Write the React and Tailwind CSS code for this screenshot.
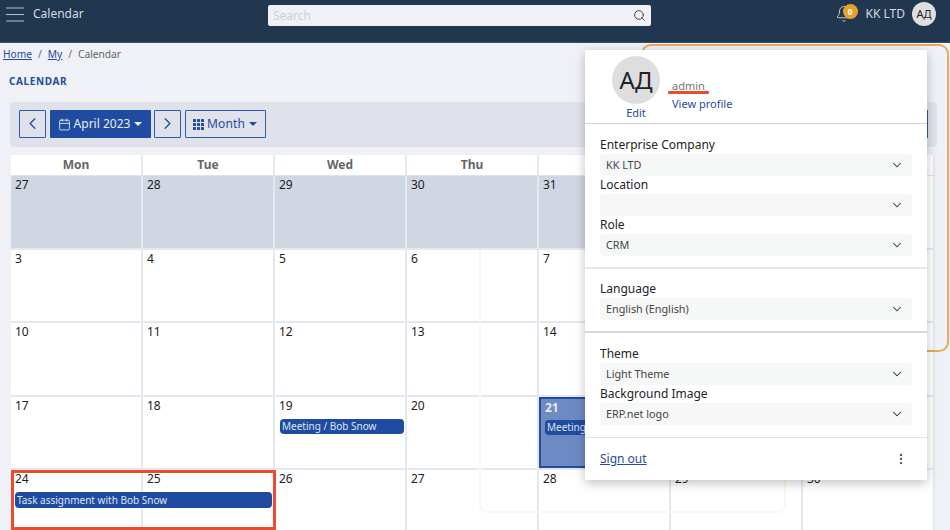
import React from "react";
import { ChevronDown, ChevronLeft, ChevronRight, Search, Bell, Calendar, MoreVertical } from "lucide-react";

const weeks = [
  [27, 28, 29, 30, 31, 1, 2],
  [3, 4, 5, 6, 7, 8, 9],
  [10, 11, 12, 13, 14, 15, 16],
  [17, 18, 19, 20, 21, 22, 23],
  [24, 25, 26, 27, 28, 29, 30],
];
const heads = ["Mon", "Tue", "Wed", "Thu", "Fri", "Sat", "Sun"];

function Caret() {
  return <span className="inline-block w-0 h-0 border-x-[4px] border-x-transparent border-t-[4px] border-t-current ml-[4px]" />;
}

function Grid3() {
  return (
    <svg width="11" height="11" viewBox="0 0 11 11" fill="currentColor">
      {[0, 4, 8].map((x) => [0, 4, 8].map((y) => <rect key={`${x}-${y}`} x={x} y={y} width="3" height="3" rx="0.5" />))}
    </svg>
  );
}

function Burger() {
  return (
    <svg width="18" height="15" viewBox="0 0 18 15" stroke="#b8c0ca" strokeWidth="1.2" fill="none">
      <path d="M0 1h18M0 7.5h18M0 14h18" />
    </svg>
  );
}

function Field({ label, value, className = "" }) {
  return (
    <div className={className}>
      <div className="h-[20px] text-[12px] leading-[22px] text-[#212529]">{label}</div>
      <div className="h-[22px] bg-[#f6f7f7] rounded-[3px] flex items-center justify-between pl-[6px] pr-[8px] text-[10.8px] text-[#444]">
        <span>{value}</span>
        <ChevronDown size={14} strokeWidth={1.8} className="text-[#333]" />
      </div>
    </div>
  );
}

function Event({ children, className = "" }) {
  return (
    <div className={`h-[15px] rounded-[4px] bg-[#1f4ba1] text-[#dfe6f3] text-[10px] leading-[15px] pl-[2px] whitespace-nowrap overflow-hidden ${className}`}>
      {children}
    </div>
  );
}

export default function App() {
  return (
    <div className="relative w-[950px] h-[530px] overflow-hidden bg-[#eff1f6] font-['Noto_Sans',sans-serif]">
      <header className="h-[43px] bg-[#21364f] border-b border-[#3a4f68] flex items-start text-[#d5dae1]">
        <div className="ml-[6px] mt-[7px]"><Burger /></div>
        <span className="ml-[9px] mt-[4px] w-[235px] text-[12px] leading-[20px]">Calendar</span>
        <div className="mt-[5px] w-[383px] h-[21px] bg-[#eff1f6] rounded-[2px] flex items-center justify-between pl-[5px] pr-[5px]">
          <span className="text-[12px] text-[#ccd0d6]">Search</span>
          <Search size={13} strokeWidth={1.6} className="text-[#333]" />
        </div>
        <div className="ml-auto mr-[14px] mt-[2px] flex items-center">
          <div className="relative mr-[13px]">
            <Bell size={18} strokeWidth={1.3} className="text-[#c5ccd4] -mt-[1px]" />
            <span className="absolute -top-[2px] left-[8px] w-[15px] h-[15px] rounded-full bg-[#e8a02c] text-white text-[8px] font-bold leading-[15px] text-center">0</span>
          </div>
          <span className="text-[12px] mr-[7px] whitespace-nowrap">KK LTD</span>
          <div className="w-[24px] h-[24px] rounded-full bg-[#dedede] text-[#222] text-[11px] leading-[24px] text-center">АД</div>
        </div>
      </header>

      <nav className="h-[20px] mt-[1px] pl-[3px] text-[10.2px] leading-[20px] text-[#666] whitespace-nowrap">
        <a className="text-[#1f4ba1] underline">Home</a>
        <span className="mx-[6px]">/</span>
        <a className="text-[#1f4ba1] underline">My</a>
        <span className="mx-[6px]">/</span>
        <span>Calendar</span>
      </nav>

      <div className="flex items-center justify-between pl-[9px] pr-[21px] mt-[7px] h-[20px]">
        <h1 className="text-[10px] font-bold tracking-[0.6px] text-[#1f4ba1]">CALENDAR</h1>
        <span className="text-[#777] text-[11px]">⋮</span>
      </div>

      <div className="ml-[10px] mr-[13px] mt-[11px] h-[45px] bg-[#dfe2ea] rounded-[4px] flex items-center pl-[9px] pb-[2px] gap-[3.5px] text-[#1f4ba1]">
        <button className="w-[27px] h-[28px] border-[1.5px] border-[#2e5cad] flex items-center justify-center rounded-[1px]">
          <ChevronLeft size={19} strokeWidth={1.6} />
        </button>
        <button className="w-[101px] h-[28px] pt-[1px] bg-[#1f4ba1] text-[#e8edf6] flex items-center justify-center text-[12px] rounded-[1px]">
          <Calendar size={13} strokeWidth={1.6} className="mr-[3px]" />
          April 2023
          <Caret />
        </button>
        <button className="w-[27px] h-[28px] border-[1.5px] border-[#2e5cad] flex items-center justify-center rounded-[1px]">
          <ChevronRight size={19} strokeWidth={1.6} />
        </button>
        <button className="w-[81px] h-[28px] pt-[1px] border-[1.5px] border-[#2e5cad] flex items-center justify-center text-[12px] tracking-[0.1px] rounded-[1px]">
          <Grid3 />
          <span className="ml-[3px]">Month</span>
          <Caret />
        </button>
        <button className="ml-auto mr-[9px] w-[30px] h-[28px] border-[1.5px] border-[#2e5cad]" />
      </div>

      <div className="ml-[11px] mr-[15px] mt-[8px] bg-white">
        <div className="grid grid-cols-7 h-[21px] border-b border-[#dfe3ed]">
          {heads.map((h) => (
            <div key={h} className="border-r-2 border-[#e6e9f1] text-center text-[12px] font-bold text-[#666] leading-[20px]">{h}</div>
          ))}
        </div>
        {weeks.map((w, i) => (
          <div key={i} className="grid grid-cols-7 h-[73.6px] border-b-2 border-[#e4e8f1]">
            {w.map((d, j) => {
              const grey = i === 0 && j < 5;
              const today = i === 3 && j === 4;
              return (
                <div
                  key={j}
                  className={`relative pl-[4px] text-[12px] leading-[18px] text-[#222] ${grey ? "bg-[#d0d6e2]" : ""} ${today ? "bg-[#6e8ac2] border-2 border-[#1f4ba1] text-[#e6ebf5] font-bold pl-[3px]" : "border-r-2 border-[#e4e8f1]"}`}
                >
                  {d}
                  {i === 3 && j === 2 && <Event className="mt-[4px] ml-[1px] w-[124px]">Meeting / Bob Snow</Event>}
                  {today && <Event className="mt-[3px] w-[124px] font-normal">Meeting / Bob Snow</Event>}
                </div>
              );
            })}
          </div>
        ))}
      </div>

      <div className="absolute left-[479px] top-[250px] w-[307px] h-[263px] border-2 border-t-0 border-[#fdf6ec] rounded-b-[8px]" />
      <div className="absolute left-[641px] top-[44px] w-[308px] h-[308px] border-2 border-[#eaa956] rounded-[10px]" />

      <div className="absolute left-[11px] top-[470px] w-[265px] h-[60px] border-[3px] border-[#ee4a2f]" />
      <Event className="absolute left-[15px] top-[492px] w-[257px] !h-[16px] !leading-[16px]">Task assignment with Bob Snow</Event>

      <div className="absolute left-[585px] top-[50px] w-[342px] h-[430px] bg-white shadow-[0_3px_10px_rgba(0,0,0,0.25)] flex flex-col">
        <div className="h-[74px] border-b border-[#cfd2da] flex">
          <div className="ml-[27px] mt-[6px] w-[48px] flex flex-col items-center">
            <div className="w-[48px] h-[48px] rounded-full bg-[#dedede] text-[#222] text-[24px] leading-[48px] text-center">АД</div>
            <a className="text-[11px] leading-[16px] mt-[1px] text-[#1f4ba1]">Edit</a>
          </div>
          <div className="ml-[12px] mt-[27px] relative">
            <div className="text-[11px] leading-[18px] text-[#777]">admin</div>
            <div className="absolute left-[-4px] top-[14px] w-[41px] h-[3px] bg-[#ee4a2f] rounded-[1px]" />
            <a className="block text-[11px] leading-[18px] text-[#1f4ba1]">View profile</a>
          </div>
        </div>
        <div className="h-[145px] border-b-2 border-[#e6e8ec] px-[15px] pt-[10px]">
          <Field label="Enterprise Company" value="KK LTD" />
          <Field label="Location" value="" className="mt-[-2px]" />
          <Field label="Role" value="CRM" className="mt-[-2px]" />
        </div>
        <div className="h-[64px] border-b-2 border-[#d6d8dd] px-[15px] pt-[9px]">
          <Field label="Language" value="English (English)" />
        </div>
        <div className="h-[105px] border-b border-[#e0e2e6] px-[15px] pt-[10px]">
          <Field label="Theme" value="Light Theme" />
          <Field label="Background Image" value="ERP.net logo" className="mt-[-2px]" />
        </div>
        <div className="flex-1 flex items-center justify-between pl-[15px] pr-[19px]">
          <a className="text-[12px] text-[#1f4ba1] underline">Sign out</a>
          <MoreVertical size={14} strokeWidth={2} className="text-[#555]" />
        </div>
      </div>
    </div>
  );
}
